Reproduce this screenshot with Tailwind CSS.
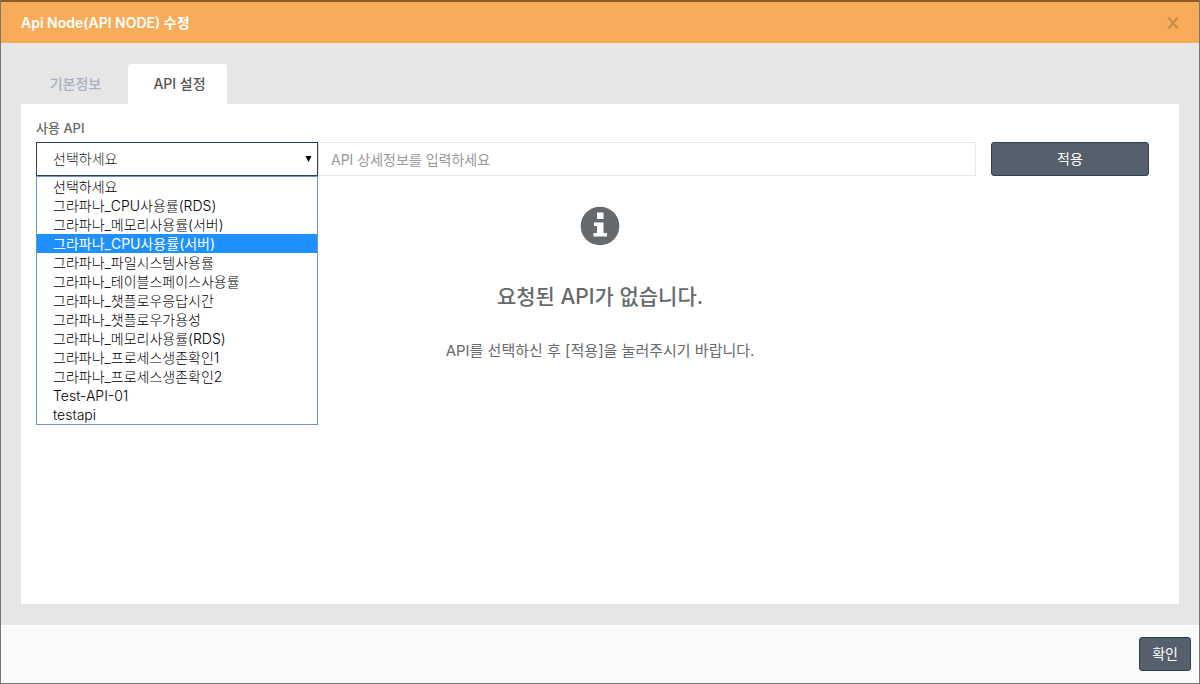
<!DOCTYPE html>
<html lang="ko">
<head>
<meta charset="utf-8">
<meta name="viewport" content="width=device-width, initial-scale=1">
<title>Api Node 수정</title>
<script src="https://cdn.jsdelivr.net/npm/@tailwindcss/browser@4"></script>
</head>
<body class="flex min-h-screen flex-col bg-[#77766f] px-px pb-px font-['Inter','Noto_Sans_CJK_KR',sans-serif] text-sm font-light text-[#676a6c]">
<div role="dialog" aria-labelledby="title" class="flex grow flex-col border-t-2 border-[#8e5c2d]">
  <header class="flex h-[41px] items-center justify-between bg-[#f8ac59] px-5">
    <h1 id="title" class="text-sm font-semibold text-white">Api Node(API NODE) 수정</h1>
    <button type="button" aria-label="닫기" class="text-[#c68a47]">
      <svg class="h-3 w-3" viewBox="0 0 12 12" fill="none" stroke="currentColor" stroke-width="2"><path d="M1.500 .5 10.500 11.500M10.500 .5 1.500 11.500"/></svg>
    </button>
  </header>
  <main class="flex grow flex-col bg-[#e6e6e6] px-5 py-[21px]">
    <div role="tablist" class="flex h-10 text-sm font-medium">
      <button type="button" role="tab" aria-selected="false" class="w-[107px] pl-0.5 text-[#a7b1c2]">기본정보</button>
      <button type="button" role="tab" aria-selected="true" class="w-[99px] rounded-t-[3px] bg-white pl-1 text-[#555555]">API 설정</button>
    </div>
    <section role="tabpanel" class="grow bg-white p-[15px]">
      <label for="api" class="mb-1 block text-[13px] leading-[19px] font-medium">사용 API</label>
      <div class="grid grid-cols-12">
        <div class="relative col-span-3">
          <select id="api" class="h-[34px] w-full appearance-none rounded-none border border-[#2f4050] bg-white px-4 text-sm text-[#222222]">
            <option>선택하세요</option>
          </select>
          <svg class="pointer-events-none absolute top-[14px] right-[6px] h-[7px] w-[7px]" viewBox="0 0 7 7"><path d="M.5 0h6L3.500 6z" fill="#000"/></svg>
          <ul role="listbox" aria-label="사용 API" class="absolute top-full left-0 z-10 w-full border border-[#6f94cc] bg-white text-sm leading-[19px] text-black *:px-4">
            <li role="option">선택하세요</li>
            <li role="option">그라파나_CPU사용률(RDS)</li>
            <li role="option">그라파나_메모리사용률(서버)</li>
            <li role="option" aria-selected="true" class="bg-[#1e90ff] font-normal text-white">그라파나_CPU사용률(서버)</li>
            <li role="option">그라파나_파일시스템사용률</li>
            <li role="option">그라파나_테이블스페이스사용률</li>
            <li role="option">그라파나_챗플로우응답시간</li>
            <li role="option">그라파나_챗플로우가용성</li>
            <li role="option">그라파나_메모리사용률(RDS)</li>
            <li role="option">그라파나_프로세스생존확인1</li>
            <li role="option">그라파나_프로세스생존확인2</li>
            <li role="option">Test-API-01</li>
            <li role="option">testapi</li>
          </ul>
        </div>
        <input type="text" aria-label="API 상세정보" placeholder="API 상세정보를 입력하세요" class="col-span-7 h-[34px] border border-[#e5e6e7] px-3 text-sm font-normal placeholder:text-[#999999]">
        <div class="col-span-2 px-[15px]">
          <button type="button" class="h-[34px] w-full rounded-[3px] border border-[#2f4050] bg-[#55606c] text-sm font-normal text-white">적용</button>
        </div>
      </div>
      <div class="flex flex-col items-center pt-[30px] text-center">
        <svg class="h-10 w-10" viewBox="0 0 40 40"><circle cx="20" cy="20" r="19.300" fill="#676a6c"/><path fill="#fff" d="M17 6.500h6.500v6.500H17zM14 16.500h9.500v10.500H27v3.500H13.500V27H17v-7h-3z"/></svg>
        <h2 class="mt-[37px] text-[21px] leading-7 font-medium">요청된 API가 없습니다.</h2>
        <p class="mt-7 text-[15px] leading-6 font-normal">API를 선택하신 후 [적용]을 눌러주시기 바랍니다.</p>
      </div>
    </section>
  </main>
  <footer class="flex h-[58px] items-center justify-end bg-[#f8fafb] px-2">
    <button type="button" class="h-[34px] rounded-[3px] border border-[#2f4050] bg-[#55606c] px-3 text-sm font-normal text-white">확인</button>
  </footer>
</div>
</body>
</html>
